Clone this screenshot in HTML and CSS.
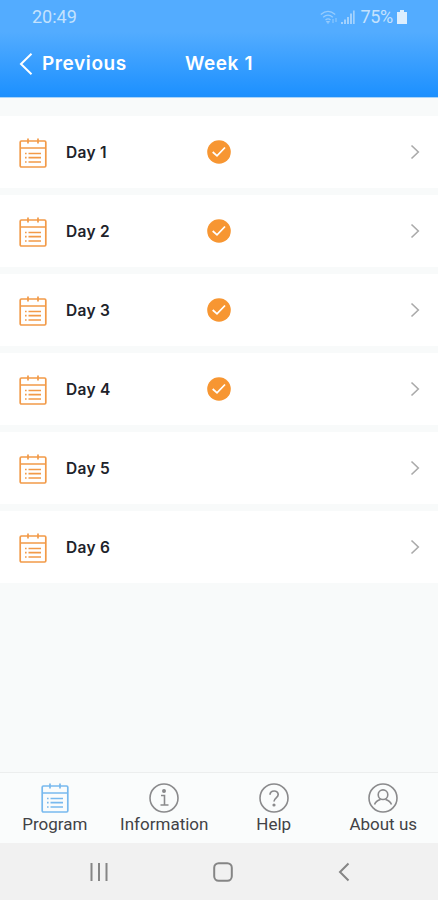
FILE: index.html
```html
<!DOCTYPE html>
<html lang="en">
<head>
<meta charset="utf-8">
<title>Week 1</title>
<link rel="stylesheet" href="styles.css">
</head>
<body>
<svg class="defs" width="0" height="0" aria-hidden="true">
  <symbol id="calendar" viewBox="0 0 28 30">
    <g fill="none" stroke="currentColor" stroke-width="1.7">
      <rect x="1.2" y="3" width="25.6" height="26" rx="1.2"/>
      <path d="M1.2 10h25.6M9 .5v5M19 .5v5"/>
      <path d="M9.500 15.500H22M9.500 19.700H22M9.500 24H22M6 15.500h1.600M6 19.700h1.600M6 24h1.600"/>
    </g>
  </symbol>
  <symbol id="check" viewBox="0 0 24 24">
    <circle cx="12" cy="12" r="11.8" fill="#f79632"/>
    <path d="M5.700 12l4.300 3.800 8-8.300" fill="none" stroke="#fff" stroke-width="1.800"/>
  </symbol>
  <symbol id="chevron" viewBox="0 0 10 16">
    <path d="M1.500 1.500L8.300 8l-6.800 6.500" fill="none" stroke="currentColor" stroke-width="1.600"/>
  </symbol>
</svg>
<div class="screen">
  <header class="header">
    <div class="status">
      <span class="time">20:49</span>
      <svg class="wifi" width="18" height="15" viewBox="0 0 18 15" fill="none" stroke="currentColor" stroke-width="1.3">
        <path d="M.8 4.500c4.600-4 9.800-4 14.400 0M3.200 7.300c3-2.700 6.600-2.700 9.600 0M5.500 10c1.700-1.500 3.500-1.500 5 0"/><path d="M8 13.500l-1.500-2h3zM13 9v4M16 8v4" stroke-width="1"/>
      </svg>
      <svg class="signal" width="14" height="15" viewBox="0 0 14 15" fill="currentColor">
        <path d="M0 12h2v2H0zM3 9.500h2V14H3zM6 7h2v7H6zM9 3.500h2V14H9zM12 .5h1.700V14H12z"/>
      </svg>
      <span class="percent">75%</span>
      <svg class="battery" width="10" height="14" viewBox="0 0 10 14" fill="currentColor"><path d="M3 0h4v2h3v12H0V2h3z"/></svg>
    </div>
    <div class="navbar">
      <a class="back"><svg width="14" height="24" viewBox="0 0 14 24"><path d="M12.500 1.800L2 12l10.500 10.200" fill="none" stroke="#fff" stroke-width="2"/></svg><span>Previous</span></a>
      <h1>Week 1</h1>
    </div>
  </header>
  <main class="days">
    <div class="day"><svg class="cal"><use href="#calendar"/></svg><span class="label">Day 1</span><svg class="done"><use href="#check"/></svg><svg class="go"><use href="#chevron"/></svg></div>
    <div class="day"><svg class="cal"><use href="#calendar"/></svg><span class="label">Day 2</span><svg class="done"><use href="#check"/></svg><svg class="go"><use href="#chevron"/></svg></div>
    <div class="day"><svg class="cal"><use href="#calendar"/></svg><span class="label">Day 3</span><svg class="done"><use href="#check"/></svg><svg class="go"><use href="#chevron"/></svg></div>
    <div class="day"><svg class="cal"><use href="#calendar"/></svg><span class="label">Day 4</span><svg class="done"><use href="#check"/></svg><svg class="go"><use href="#chevron"/></svg></div>
    <div class="day"><svg class="cal"><use href="#calendar"/></svg><span class="label">Day 5</span><svg class="go"><use href="#chevron"/></svg></div>
    <div class="day"><svg class="cal"><use href="#calendar"/></svg><span class="label">Day 6</span><svg class="go"><use href="#chevron"/></svg></div>
  </main>
  <nav class="tabs">
    <a class="tab active"><svg viewBox="0 0 28 30"><use href="#calendar"/></svg><span>Program</span></a>
    <a class="tab"><svg viewBox="0 0 30 30" fill="none" stroke="currentColor" stroke-width="1.600"><circle cx="15" cy="15" r="14"/><path d="M12 12.500h3.500V22M11.500 22h8"/><circle cx="15" cy="8" r="1.200" fill="currentColor"/></svg><span>Information</span></a>
    <a class="tab"><svg viewBox="0 0 30 30" fill="none" stroke="currentColor" stroke-width="1.600"><circle cx="15" cy="15" r="14"/><path d="M11 11.800c.2-5 8.200-5 8.200-.2 0 3.300-4.200 3.200-4.200 7" stroke-width="1.700"/><circle cx="15" cy="22" r=".8" fill="currentColor"/></svg><span>Help</span></a>
    <a class="tab"><svg viewBox="0 0 30 30" fill="none" stroke="currentColor" stroke-width="1.600"><circle cx="15" cy="15" r="14"/><circle cx="15" cy="11.700" r="4.800"/><path d="M6.500 21.500c1.200-3 3.300-4.300 6-5M23.500 21.500c-1.200-3-3.300-4.300-6-5"/></svg><span>About us</span></a>
  </nav>
  <footer class="system">
    <svg width="18" height="20" viewBox="0 0 18 20" stroke="currentColor" stroke-width="2"><path d="M1.500 1v18M9 1v18M16.500 1v18"/></svg>
    <svg width="20" height="20" viewBox="0 0 20 20" fill="none" stroke="currentColor" stroke-width="2"><rect x="1.200" y="1.200" width="17.600" height="17.600" rx="4.500"/></svg>
    <svg width="12" height="20" viewBox="0 0 12 20" fill="none" stroke="currentColor" stroke-width="2"><path d="M10.500 1.500L2 10l8.500 8.500"/></svg>
  </footer>
</div>
</body>
</html>
```
FILE: styles.css
```css
* { box-sizing: border-box; }
body { margin: 0; }
.defs { display: none; }
.screen {
  width: 438px;
  height: 900px;
  display: flex;
  flex-direction: column;
  background: #f8fafa;
  font-family: Roboto, "Liberation Sans", sans-serif;
  overflow: hidden;
}
.header {
  height: 98px;
  flex: none;
  background: linear-gradient(#53acff 0, #53acff 32px, #1e91ff 94px, #1e8ffb 97px);
  border-bottom: 1px solid #a9d4fa;
  color: #fff;
}
.status {
  height: 34px;
  padding: 0 31px 0 32px;
  display: flex;
  align-items: center;
  color: #c4e2fd;
  font-size: 18px;
  line-height: 34px;
}
.time { margin-right: auto; }
.wifi { opacity: .6; margin-right: 3px; }
.signal { opacity: .7; margin-right: 5px; }
.percent { letter-spacing: -.3px; margin-right: 4px; }
.battery { color: #dceefe; }
.navbar {
  height: 59px;
  display: grid;
  grid-template-columns: 1fr auto 1fr;
  align-items: center;
  padding: 0 19px;
  font-family: Inter, "Liberation Sans", sans-serif;
  font-size: 19px;
  font-weight: 600;
  letter-spacing: .6px;
}
.back { display: flex; align-items: center; gap: 9px; }
h1 { margin: 0; font-size: 19px; font-weight: 600; }
.days { flex: 1; padding-top: 18px; display: flex; flex-direction: column; gap: 7px; }
.day {
  height: 72px;
  flex: none;
  background: #fff;
  display: grid;
  grid-template-columns: 47px 141px 1fr 10px;
  align-items: center;
  padding: 0 18px 0 19px;
  color: #20222a;
}
.cal { width: 28px; height: 30px; margin-top: 1px; color: #f29a48; }
.label { font: 600 15.5px Inter, "Liberation Sans", sans-serif; letter-spacing: .3px; }
.done { width: 24px; height: 24px; }
.go { width: 10px; height: 16px; grid-column: 4; color: #aaa; }
.tabs {
  height: 71px;
  flex: none;
  border-top: 1px solid #eceeee;
  background: #fafcfc;
  display: grid;
  grid-template-columns: repeat(4, 1fr);
}
.tab {
  padding-top: 10px;
  display: flex;
  flex-direction: column;
  align-items: center;
  color: #8a8a8c;
}
.tab svg { width: 30px; height: 30px; }
.tab span { color: #424246; font-size: 17px; line-height: 22px; }
.active { color: #78b9ee; }
.system {
  height: 57px;
  flex: none;
  background: #f1f1f1;
  color: #858585;
  display: flex;
  align-items: center;
  justify-content: space-between;
  padding: 0 88px 0 90px;
}
```
